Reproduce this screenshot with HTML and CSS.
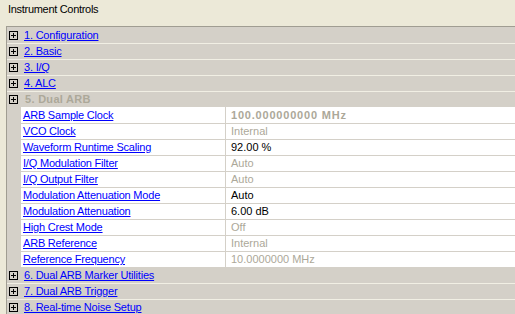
FILE: index.html
```html
<!DOCTYPE html>
<html>

<head>
  <title>Instrument Controls</title>
  <meta charset="UTF-8">
  <link rel="stylesheet" href="styles.css">
</head>

<body>
  <div class="title">Instrument Controls</div>
  <div class="panel">
    <div class="cat"><span class="plus"></span><a href="#">1. Configuration</a></div>
    <div class="cat"><span class="plus"></span><a href="#">2. Basic</a></div>
    <div class="cat"><span class="plus"></span><a href="#">3. I/Q</a></div>
    <div class="cat"><span class="plus"></span><a href="#">4. ALC</a></div>
    <div class="cat"><span class="plus"></span><span class="off">5. Dual ARB</span></div>
    <div class="sub">
      <div class="row"><a href="#">ARB Sample Clock</a><span class="val dim big">100.000000000 MHz</span></div>
      <div class="row"><a href="#">VCO Clock</a><span class="val dim">Internal</span></div>
      <div class="row"><a href="#">Waveform Runtime Scaling</a><span class="val">92.00 %</span></div>
      <div class="row"><a href="#">I/Q Modulation Filter</a><span class="val dim">Auto</span></div>
      <div class="row"><a href="#">I/Q Output Filter</a><span class="val dim">Auto</span></div>
      <div class="row"><a href="#">Modulation Attenuation Mode</a><span class="val">Auto</span></div>
      <div class="row"><a href="#">Modulation Attenuation</a><span class="val">6.00 dB</span></div>
      <div class="row"><a href="#">High Crest Mode</a><span class="val dim">Off</span></div>
      <div class="row"><a href="#">ARB Reference</a><span class="val dim">Internal</span></div>
      <div class="row"><a href="#">Reference Frequency</a><span class="val dim">10.0000000 MHz</span></div>
    </div>
    <div class="cat"><span class="plus"></span><a href="#">6. Dual ARB Marker Utilities</a></div>
    <div class="cat"><span class="plus"></span><a href="#">7. Dual ARB Trigger</a></div>
    <div class="cat"><span class="plus"></span><a href="#">8. Real-time Noise Setup</a></div>
  </div>
</body>

</html>
```

FILE: styles.css
```css
body {
  margin: 0;
  height: 314px;
  background-color: #ece9d8;
  font-family: "Liberation Sans", Arial, sans-serif;
  font-size: 11px;
  overflow: hidden;
}

a {
  color: #0000ff;
  letter-spacing: -0.2px;
}

.title {
  height: 23px;
  padding: 3px 0 0 8px;
  line-height: 13px;
  letter-spacing: -0.3px;
  color: #000;
}

.panel {
  margin-left: 6px;
  height: 287px;
  overflow: hidden;
  border-top: 1px solid #a09d92;
  border-left: 1px solid #a09d92;
  background-color: #d4d0c8;
}

.cat {
  display: flex;
  align-items: center;
  height: 16px;
  box-sizing: border-box;
  line-height: 15px;
}

.cat + .cat {
  border-top: 1px solid #f1efe4;
}

.cat > a {
  margin-left: -1px;
}

.plus {
  position: relative;
  width: 7px;
  height: 7px;
  margin: 0 7px 0 2px;
  border: 1px solid #000;
}

.plus::before,
.plus::after {
  content: "";
  position: absolute;
  background-color: #000;
}

.plus::before {
  left: 1px;
  top: 3px;
  width: 5px;
  height: 1px;
}

.plus::after {
  left: 3px;
  top: 1px;
  width: 1px;
  height: 5px;
}

.off {
  color: #aca899;
  font-weight: bold;
  letter-spacing: 0.3px;
}

.sub {
  margin-left: 14px;
  background-color: #fff;
}

.row {
  display: grid;
  grid-template-columns: 205px 1fr;
  height: 16px;
  box-sizing: border-box;
  line-height: 15px;
}

.row:first-child {
  line-height: 16px;
}

.row + .row {
  border-top: 1px solid #d4d0c8;
}

.row > a {
  padding-left: 2px;
  border-right: 1px solid #d4d0c8;
  white-space: nowrap;
}

.val {
  padding-left: 5px;
  color: #000;
}

.dim {
  color: #aca899;
}

.big {
  font-weight: bold;
  letter-spacing: 0.8px;
}
```
